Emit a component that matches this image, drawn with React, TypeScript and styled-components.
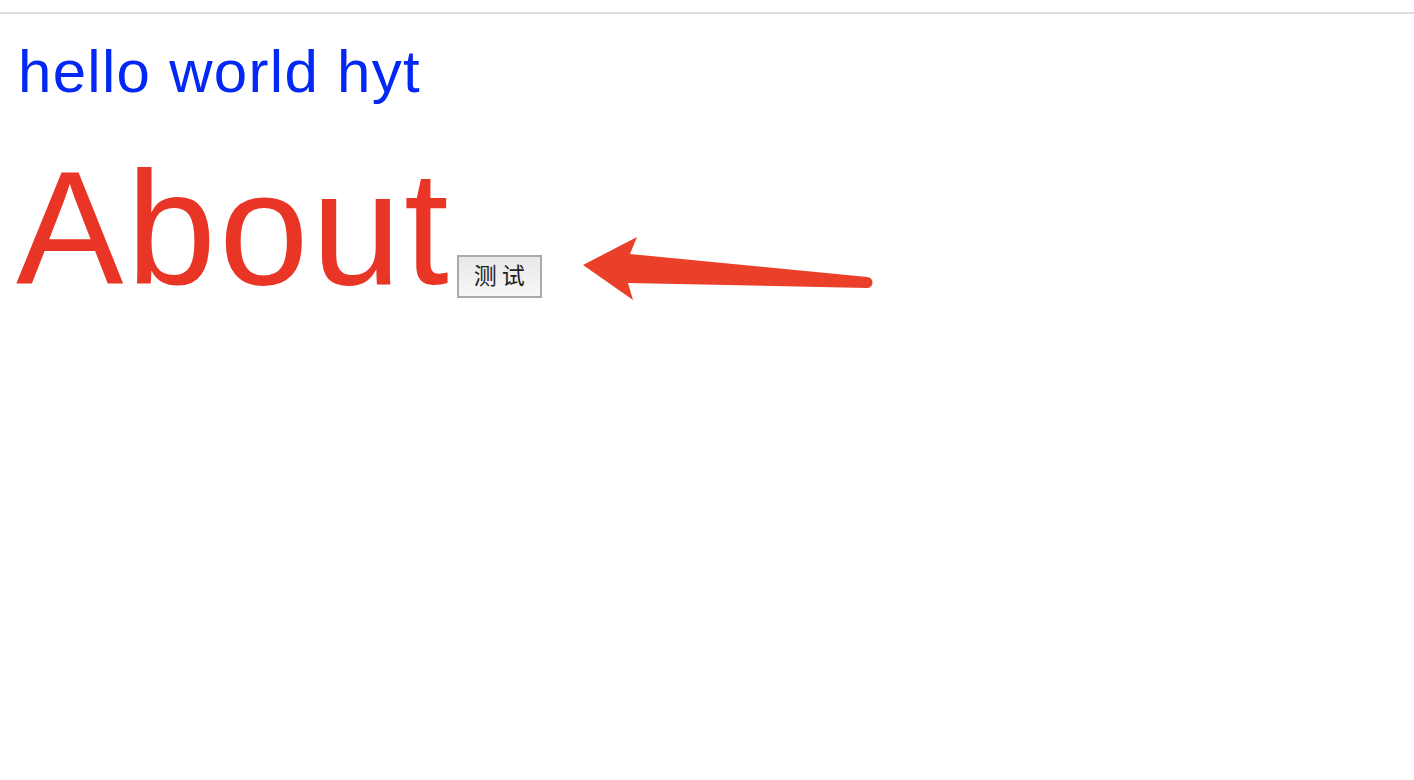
import React from 'react';
import styled, { createGlobalStyle } from 'styled-components';

const GlobalStyle = createGlobalStyle`
  html, body {
    margin: 0;
    padding: 0;
    background: #fff;
  }
  body {
    font-family: 'Liberation Sans', Arial, 'Noto Sans CJK SC', sans-serif;
  }
`;

const Page = styled.div`
  position: relative;
  width: 100%;
  min-height: 780px;
  background: #fff;
`;

const TopBar = styled.div`
  height: 12px;
  border-bottom: 2px solid #dcdce0;
`;

const Content = styled.main`
  padding: 23px 14px 0;
`;

const Greeting = styled.div`
  margin-left: 4px;
  font-size: 60px;
  line-height: 70px;
  letter-spacing: 1.3px;
  color: #0327f4;
`;

const Title = styled.h1`
  margin: 31px 0 0 2px;
  font-size: 161px;
  font-weight: 400;
  line-height: 180px;
  letter-spacing: 3px;
  color: #e93526;
`;

const TestButton = styled.button`
  display: inline-block;
  vertical-align: baseline;
  margin-left: 5px;
  width: 85px;
  height: 43px;
  padding: 0 0 3px;
  border: 2px solid #aaaaaa;
  border-radius: 0;
  background: linear-gradient(#e8e8e8, #f7f7f7);
  color: #222;
  font-family: 'Noto Sans CJK SC', sans-serif;
  font-size: 23px;
  line-height: 1;
  letter-spacing: 0;
  cursor: pointer;
`;

const ArrowMark = styled.svg`
  position: absolute;
  left: 580px;
  top: 234px;
  width: 296px;
  height: 70px;
  pointer-events: none;
`;

export default function App() {
  return (
    <Page>
      <GlobalStyle />
      <TopBar />
      <Content>
        <Greeting>hello world hyt</Greeting>
        <Title>
          About
          <TestButton type='button'>测 试</TestButton>
        </Title>
      </Content>
      <ArrowMark viewBox='0 0 296 70'>
        <path
          d='M3 31 L57 3 L50 20 L287 43 A5.5 5.5 0 0 1 287 54 L48 49 L53 66 Z'
          fill='#ea3f28'
        />
      </ArrowMark>
    </Page>
  );
}
